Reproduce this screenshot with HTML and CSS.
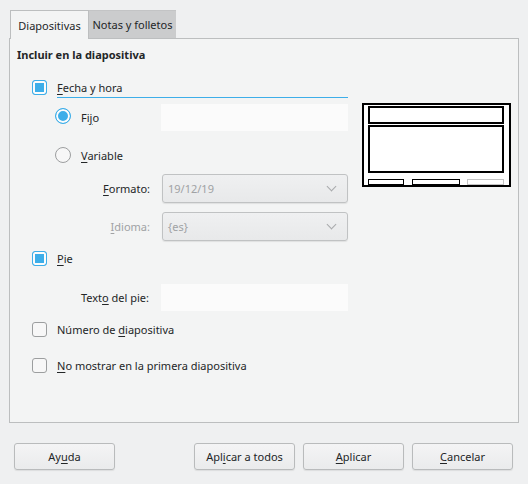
FILE: index.html
```html
<!DOCTYPE html>
<html lang="es">
<head>
  <meta charset="UTF-8" />
  <title>Encabezado y pie de página</title>
  <link rel="stylesheet" href="styles.css">
</head>
<body>
  <div class="dialog">

    <!-- pestañas -->
    <div class="tabs">
      <div class="tab active">Diapositivas</div>
      <div class="tab">Notas y folletos</div>
    </div>

    <div class="panel">
      <div class="heading">Incluir en la diapositiva</div>

      <div class="body">
        <div class="left">
          <div class="row row-fecha">
            <span class="check on"></span>
            <span class="line-label"><u>F</u>echa y hora</span>
          </div>

          <div class="row row-fijo">
            <span class="radio on"></span>
            <span class="radio-label">Fi<u>j</u>o</span>
            <span class="field"></span>
          </div>

          <div class="row row-variable">
            <span class="radio"></span>
            <span class="radio-label"><u>V</u>ariable</span>
          </div>

          <div class="row row-combo">
            <span class="side-label"><u>F</u>ormato:</span>
            <div class="combo"><span>19/12/19</span><span class="chev"></span></div>
          </div>

          <div class="row row-combo row-idioma">
            <span class="side-label disabled"><u>I</u>dioma:</span>
            <div class="combo"><span>{es}</span><span class="chev"></span></div>
          </div>

          <div class="row row-pie">
            <span class="check on"></span>
            <span class="check-label"><u>P</u>ie</span>
          </div>

          <div class="row row-texto">
            <span class="side-label">Text<u>o</u> del pie:</span>
            <span class="field"></span>
          </div>

          <div class="row row-numero">
            <span class="check"></span>
            <span class="check-label">Número de <u>d</u>iapositiva</span>
          </div>

          <div class="row row-nomostrar">
            <span class="check"></span>
            <span class="check-label"><u>N</u>o mostrar en la primera diapositiva</span>
          </div>
        </div>

        <!-- vista previa -->
        <div class="preview">
          <div class="pv-head"></div>
          <div class="pv-main"></div>
          <div class="pv-foot">
            <span class="pv-date"></span>
            <span class="pv-text"></span>
            <span class="pv-num"></span>
          </div>
        </div>
      </div>
    </div>

    <div class="buttons">
      <button>Ay<u>u</u>da</button>
      <span class="spacer"></span>
      <button>Apl<u>i</u>car a todos</button>
      <button><u>A</u>plicar</button>
      <button><u>C</u>ancelar</button>
    </div>
  </div>
</body>
</html>
```

FILE: styles.css
```css
:root {
  --window-bg: #eff0f1;
  --panel-bg: #f3f4f4;
  --border: #bcbebf;
  --text: #232627;
  --disabled: #a0a2a4;
  --accent: #3daee9;
}

body {
  margin: 0;
  background: var(--window-bg);
  color: var(--text);
  font-family: "Noto Sans", sans-serif;
  font-size: 11px;
}

u {
  text-decoration-thickness: 1px;
  text-underline-offset: 2px;
}

.dialog {
  width: 528px;
  height: 484px;
  padding: 10px 10px 0 9px;
  box-sizing: border-box;
}

.tabs {
  display: flex;
  padding-left: 1px;
  height: 28px;
}

.tab {
  box-sizing: border-box;
  height: 28px;
  display: flex;
  align-items: center;
  justify-content: center;
  white-space: nowrap;
  background: #cbcccd;
  border-top: 1px solid #c3c4c5;
  width: 87px;
}

.tab.active {
  width: 79px;
  background: var(--panel-bg);
  border: 1px solid var(--border);
  border-bottom: none;
  height: 29px;
  position: relative;
  z-index: 1;
}

.panel {
  box-sizing: border-box;
  width: 510px;
  height: 385px;
  background: var(--panel-bg);
  border: 1px solid var(--border);
  padding: 8px 0 0 7px;
}

.heading {
  font-weight: bold;
  height: 16px;
  line-height: 16px;
}

.body {
  display: flex;
  margin-top: 14px;
}

.left {
  width: 331px;
}

.row {
  display: flex;
  align-items: center;
}

.row-fecha {
  height: 20px;
  padding-left: 15px;
}

.line-label {
  flex: 1;
  margin-left: 10px;
  margin-top: 2px;
  padding-bottom: 1px;
  line-height: 18px;
  box-shadow: inset 0 -1px 0 #3daee9;
}

.row-fijo {
  margin-top: 7px;
  height: 27px;
  padding-left: 38px;
}

.row-fijo .radio {
  margin-top: -4px;
}

.row-variable {
  margin-top: 12px;
  height: 24px;
  padding-left: 38px;
}

.radio-label {
  margin-left: 10px;
  width: 80px;
}

.row-combo {
  margin-top: 7px;
  height: 29px;
}

.row-idioma {
  margin-top: 9px;
}

.side-label {
  width: 133px;
  text-align: right;
  margin-right: 12px;
}

.side-label.disabled {
  color: var(--disabled);
}

.combo {
  box-sizing: border-box;
  width: 186px;
  height: 29px;
  border: 1px solid #c0c2c3;
  border-radius: 3px;
  background: linear-gradient(#eff0f1, #e8e9ea);
  box-shadow: 0 1px 1px rgba(0, 0, 0, 0.08);
  color: var(--disabled);
  display: flex;
  align-items: center;
  justify-content: space-between;
  padding: 0 12px 0 5px;
}

.chev {
  width: 6px;
  height: 6px;
  border-right: 1px solid #a8aaac;
  border-bottom: 1px solid #a8aaac;
  transform: rotate(45deg);
  margin-top: -4px;
}

.field {
  box-sizing: border-box;
  width: 187px;
  height: 27px;
  background: #fbfbfb;
}

.row-pie {
  margin-top: 6px;
  height: 22px;
  padding-left: 15px;
}

.row-texto {
  margin-top: 15px;
  height: 27px;
}

.row-texto .side-label {
  width: 132px;
  margin-right: 12px;
}

.row-numero {
  margin-top: 7px;
  height: 22px;
  padding-left: 15px;
}

.row-nomostrar {
  margin-top: 14px;
  height: 22px;
  padding-left: 15px;
}

.check-label {
  margin-left: 10px;
}

.check {
  box-sizing: border-box;
  width: 15px;
  height: 15px;
  border: 1px solid #9c9e9f;
  border-radius: 3px;
  background: #f7f7f7;
  flex: none;
}

.check.on {
  border-color: var(--accent);
  background: var(--accent);
  box-shadow: inset 0 0 0 2px #fcfcfc;
}

.radio {
  box-sizing: border-box;
  width: 16px;
  height: 16px;
  border: 1px solid #9c9e9f;
  border-radius: 50%;
  background: #f7f7f7;
  flex: none;
}

.radio.on {
  border-color: var(--accent);
  background: var(--accent);
  box-shadow: inset 0 0 0 2px #fcfcfc;
}

.preview {
  box-sizing: border-box;
  width: 149px;
  height: 84px;
  margin-top: 26px;
  margin-left: 14px;
  background: #fff;
  border: 2px solid #000;
  padding: 1px 5px 0 4px;
  display: flex;
  flex-direction: column;
}

.pv-head {
  height: 15px;
  border: 2px solid #000;
}

.pv-main {
  height: 49px;
  border: 2px solid #000;
  margin-top: 1px;
}

.pv-foot {
  display: flex;
  justify-content: space-between;
  margin-top: 6px;
}

.pv-foot span {
  box-sizing: border-box;
  height: 6px;
  border: 1.5px solid #000;
}

.pv-date { width: 36px; }
.pv-text { width: 48px; }
.pv-num { width: 37px; border-color: #c4c4c4 !important; }

.buttons {
  display: flex;
  gap: 8px;
  margin-top: 20px;
  padding-left: 5px;
  padding-right: 5px;
}

.spacer {
  flex: 1;
}

button {
  font-family: inherit;
  font-size: 11px;
  color: var(--text);
  width: 101px;
  height: 27px;
  border: 1px solid #b9bbbc;
  border-radius: 3px;
  background: linear-gradient(#f4f4f5, #eaebec);
  box-shadow: 0 1px 1px rgba(0, 0, 0, 0.08);
  padding: 0;
}
```
